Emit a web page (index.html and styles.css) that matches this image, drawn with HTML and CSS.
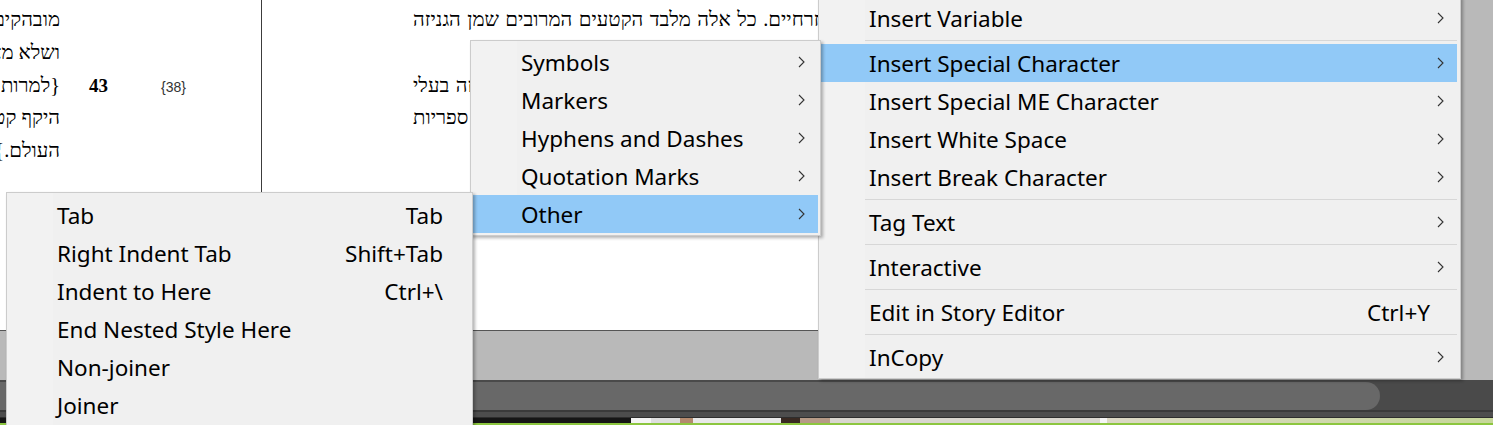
FILE: index.html
```html
<!DOCTYPE html>
<html lang="en">
<head>
<meta charset="utf-8">
<title>Context menu</title>
<link rel="stylesheet" href="styles.css">
</head>
<body>
<div class="screen">
  <div class="doc">
    <div class="page">
      <div class="col-left">
        <div class="heb heb-left" dir="rtl">
          <p>מובהקים ביותר של התקופה</p>
          <p>ושלא מצאנו להם מקבילות</p>
          <p>{למרות הכול נראה</p>
          <p>היקף קטן יחסית של</p>
          <p>העולם.}</p>
        </div>
        <div class="notes">
          <span class="linenum">43</span><span class="marker">{38}</span>
        </div>
      </div>
      <div class="col-main">
        <div class="heb heb-main" dir="rtl">
          <p>ממקורות מזרחיים. כל אלה מלבד הקטעים המרובים שמן הגניזה</p>
          <p class="blank">&nbsp;</p>
          <p>מאמרים רבים בעניין זה בעלי</p>
          <p>שנשתמרו בכמה ספריות</p>
        </div>
      </div>
    </div>
  </div>
  <div class="hscroll"><div class="thumb"></div></div>
  <div class="rule"></div>
  <div class="band"></div>
  <div class="strip"></div>
  <div class="green"></div>

  <div class="menu menu-main">
    <div class="mi"><span>Insert Variable</span><svg class="chev" viewBox="0 0 7 12"><polyline points="1,1 6,6 1,11"/></svg></div>
    <div class="sep"></div>
    <div class="mi hl"><span>Insert Special Character</span><svg class="chev" viewBox="0 0 7 12"><polyline points="1,1 6,6 1,11"/></svg></div>
    <div class="mi"><span>Insert Special ME Character</span><svg class="chev" viewBox="0 0 7 12"><polyline points="1,1 6,6 1,11"/></svg></div>
    <div class="mi"><span>Insert White Space</span><svg class="chev" viewBox="0 0 7 12"><polyline points="1,1 6,6 1,11"/></svg></div>
    <div class="mi"><span>Insert Break Character</span><svg class="chev" viewBox="0 0 7 12"><polyline points="1,1 6,6 1,11"/></svg></div>
    <div class="sep"></div>
    <div class="mi"><span>Tag Text</span><svg class="chev" viewBox="0 0 7 12"><polyline points="1,1 6,6 1,11"/></svg></div>
    <div class="sep"></div>
    <div class="mi"><span>Interactive</span><svg class="chev" viewBox="0 0 7 12"><polyline points="1,1 6,6 1,11"/></svg></div>
    <div class="sep"></div>
    <div class="mi"><span>Edit in Story Editor</span><span class="key">Ctrl+Y</span></div>
    <div class="sep"></div>
    <div class="mi"><span>InCopy</span><svg class="chev" viewBox="0 0 7 12"><polyline points="1,1 6,6 1,11"/></svg></div>
  </div>

  <div class="menu menu-sub">
    <div class="mi"><span>Symbols</span><svg class="chev" viewBox="0 0 7 12"><polyline points="1,1 6,6 1,11"/></svg></div>
    <div class="mi"><span>Markers</span><svg class="chev" viewBox="0 0 7 12"><polyline points="1,1 6,6 1,11"/></svg></div>
    <div class="mi"><span>Hyphens and Dashes</span><svg class="chev" viewBox="0 0 7 12"><polyline points="1,1 6,6 1,11"/></svg></div>
    <div class="mi"><span>Quotation Marks</span><svg class="chev" viewBox="0 0 7 12"><polyline points="1,1 6,6 1,11"/></svg></div>
    <div class="mi hl"><span>Other</span><svg class="chev" viewBox="0 0 7 12"><polyline points="1,1 6,6 1,11"/></svg></div>
  </div>

  <div class="menu menu-other">
    <div class="mi"><span>Tab</span><span class="key">Tab</span></div>
    <div class="mi"><span>Right Indent Tab</span><span class="key">Shift+Tab</span></div>
    <div class="mi"><span>Indent to Here</span><span class="key">Ctrl+\</span></div>
    <div class="mi"><span>End Nested Style Here</span></div>
    <div class="mi"><span>Non-joiner</span></div>
    <div class="mi"><span>Joiner</span></div>
  </div>
</div>
</body>
</html>
```

FILE: styles.css
```css
html, body {
  margin: 0;
  padding: 0;
}

body {
  width: 1493px;
  height: 425px;
  overflow: hidden;
  background: #b9b9b9;
}

.screen {
  position: relative;
  width: 1493px;
  height: 425px;
  overflow: hidden;
}

/* ---------- document ---------- */
.doc {
  height: 380px;
  background: #b9b9b9;
}

.page {
  display: flex;
  width: 1300px;
  height: 330px;
  background: #ffffff;
  border-bottom: 1px solid #555555;
}

.col-left {
  display: flex;
  width: 261px;
  flex: none;
  border-right: 1px solid #3c3c3c;
}

.col-main {
  flex: 1;
}

.heb {
  font-family: "Liberation Serif", "DejaVu Sans", serif;
  font-size: 20.4px;
  line-height: 32.75px;
  color: #000;
  padding-top: 3px;
}

.heb p {
  margin: 0;
  white-space: nowrap;
}

.heb-left {
  width: 60px;
  flex: none;
  text-align: right;
}

.heb-main {
  margin-left: 151px;
  width: 800px;
  text-align: left;
  word-spacing: 1.3px;
}

.notes {
  font-family: "Liberation Serif", serif;
  font-size: 20.4px;
  padding-top: 68.5px;
  line-height: 32.75px;
  white-space: nowrap;
}

.linenum {
  font-weight: bold;
  font-size: 19px;
  margin-left: 29px;
  color: #000;
}

.marker {
  font-family: "Liberation Sans", sans-serif;
  font-size: 14px;
  margin-left: 53px;
  color: #333;
}

/* ---------- bottom bars ---------- */
.hscroll {
  height: 30px;
  box-sizing: border-box;
  padding-top: 2px;
  background: #4a4a4a;
}

.thumb {
  width: 1380px;
  height: 28px;
  background: #686868;
  border-radius: 0 14px 14px 0;
}

.rule {
  height: 2px;
  background: #3a3a3a;
}

.band {
  height: 6px;
  background: #4d4d4d;
  border-bottom: 1px solid #2e2e2e;
  box-sizing: border-box;
}

.strip {
  height: 5px;
  background: linear-gradient(to right,
    #161616 0 631px,
    #f4f4f4 631px 651px,
    #dedede 651px 680px,
    #b48a6e 680px 693px,
    #e8e8e8 693px 781px,
    #3a2a22 781px 800px,
    #b69a86 800px 830px,
    #d9d6cf 830px 1100px,
    #f5f5f5 1100px 1107px,
    #dcd8c6 1107px,
    #c7d79a 1493px);
}

.green {
  height: 2px;
  background: #8cc63f;
}

/* ---------- menus ---------- */
.menu {
  position: absolute;
  box-sizing: border-box;
  border: 1px solid #cccccc;
  background-color: #f0f0f0;
  background-image: linear-gradient(to right, #f2f2f2 0 46px, #f0f0f0 46px);
  font-family: "Noto Sans", "Open Sans", sans-serif;
  font-size: 22.5px;
  color: #000;
  box-shadow: 2px 2px 3px rgba(0, 0, 0, 0.3);
}

.menu-main {
  left: 818px;
  top: -4px;
  width: 643px;
  padding: 2px 3px 2px 2px;
  z-index: 1;
}

.menu-sub {
  left: 470px;
  top: 40px;
  width: 351px;
  padding: 2px;
  z-index: 2;
}

.menu-other {
  left: 6px;
  top: 192px;
  width: 467px;
  height: 260px;
  padding: 3px 2px;
  z-index: 3;
}

.mi {
  display: flex;
  align-items: center;
  height: 38px;
  padding-left: 48px;
  padding-right: 13px;
  white-space: nowrap;
}

.menu-other .mi {
  padding-right: 27px;
}

.mi.hl {
  background: #91c9f7;
}

.key {
  margin-left: auto;
  margin-right: 14px;
}

.menu-other .key {
  margin-right: 0;
}

.chev {
  margin-left: auto;
  width: 7px;
  height: 12px;
  flex: none;
}

.chev polyline {
  fill: none;
  stroke: #333333;
  stroke-width: 1.1;
}

.sep {
  height: 1px;
  background: #d7d7d7;
  margin: 3px 0 3px 44px;
}
```
